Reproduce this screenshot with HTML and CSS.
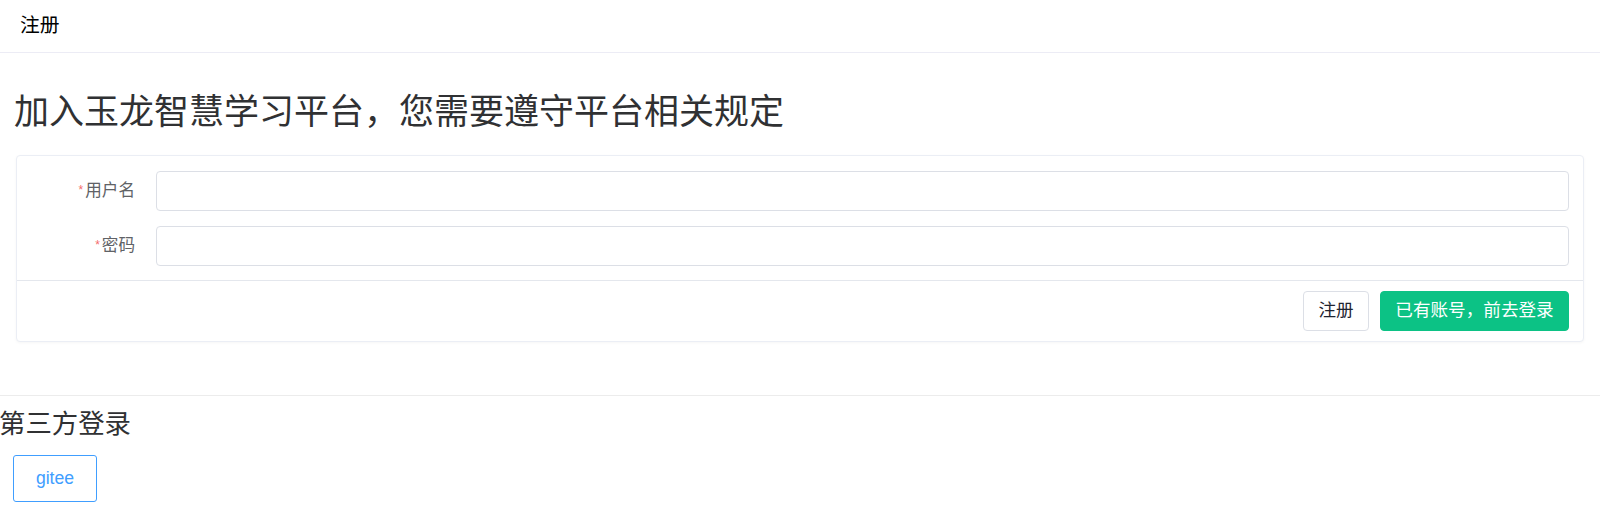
FILE: index.html
```html
<!DOCTYPE html>
<html lang="zh-CN">
<head>
<meta charset="utf-8">
<title>注册</title>
<link rel="stylesheet" href="styles.css">
</head>
<body>
<div class="page">
  <header class="topbar">注册</header>
  <section class="content">
    <h1 class="title">加入玉龙智慧学习平台，您需要遵守平台相关规定</h1>
    <div class="card">
      <div class="card-body">
        <div class="form-row">
          <label class="form-label"><span class="req">*</span>用户名</label>
          <input class="form-input" type="text">
        </div>
        <div class="form-row">
          <label class="form-label"><span class="req">*</span>密码</label>
          <input class="form-input" type="password">
        </div>
      </div>
      <div class="card-footer">
        <button class="btn btn-plain">注册</button>
        <button class="btn btn-green">已有账号，前去登录</button>
      </div>
    </div>
  </section>
  <hr class="divider">
  <h2 class="third-title">第三方登录</h2>
  <div class="third-list">
    <button class="btn-gitee">gitee</button>
  </div>
</div>
</body>
</html>
```

FILE: styles.css
```css
html, body {
  margin: 0;
  padding: 0;
  background: #fff;
}
body {
  font-family: "Liberation Sans", Arial, "Noto Sans CJK SC", sans-serif;
  color: #303133;
}
.page {
  width: 1600px;
}
.topbar {
  height: 52px;
  border-bottom: 1px solid #ececf5;
  display: flex;
  align-items: center;
  padding-left: 20px;
  font-size: 19.8px;
  line-height: 1;
  color: #000;
}
.content {
  padding: 0 16px;
}
.title {
  margin: 41px 0 0 -2px;
  font-size: 35px;
  line-height: 1;
  font-weight: normal;
  color: #303133;
}
.card {
  margin-top: 26px;
  border: 1px solid #ebeef5;
  border-radius: 4px;
  box-shadow: 0 1px 3px rgba(0, 0, 0, 0.04);
  background: #fff;
}
.card-body {
  padding: 15px 14px 14px 15px;
  display: flex;
  flex-direction: column;
  gap: 15px;
}
.form-row {
  display: flex;
  align-items: center;
}
.form-label {
  width: 124px;
  box-sizing: border-box;
  padding-right: 21px;
  text-align: right;
  font-size: 16.6px;
  color: #606266;
  line-height: 1;
}
.req {
  color: #f56c6c;
  font-size: 12px;
  margin-right: 2px;
  vertical-align: 2px;
}
.form-input {
  flex: 1;
  height: 40px;
  box-sizing: border-box;
  border: 1px solid #dcdfe6;
  border-radius: 4px;
  outline: none;
  padding: 0 15px;
  font-size: 16px;
  background: #fff;
}
.card-footer {
  border-top: 1px solid #e4e7ed;
  padding: 10px 14px 10px 15px;
  display: flex;
  justify-content: flex-end;
  gap: 11px;
}
.btn {
  height: 40px;
  box-sizing: border-box;
  border-radius: 4px;
  font-family: "Liberation Sans", Arial, "Noto Sans CJK SC", sans-serif;
  font-size: 17.6px;
  line-height: 1;
  padding: 0 15px;
  cursor: pointer;
}
.btn-plain {
  width: 66px;
  padding: 0;
  background: #fff;
  border: 1px solid #dcdfe6;
  color: #1f2430;
}
.btn-green {
  width: 189px;
  padding: 0;
  background: #0cc285;
  border: 1px solid #0cc285;
  color: #fff;
}
.divider {
  margin: 53px 0 0 0;
  border: 0;
  border-top: 1px solid #ececec;
  height: 0;
}
.third-title {
  margin: 15px 0 0 -1px;
  font-size: 26.4px;
  line-height: 1;
  font-weight: normal;
  color: #303133;
}
.third-list {
  padding-left: 13px;
  margin-top: 18px;
}
.btn-gitee {
  width: 84px;
  height: 47px;
  box-sizing: border-box;
  background: #fff;
  border: 1px solid #409eff;
  border-radius: 3px;
  color: #409eff;
  font-family: "Liberation Sans", Arial, sans-serif;
  font-size: 17.6px;
  padding: 0;
  cursor: pointer;
}
```
